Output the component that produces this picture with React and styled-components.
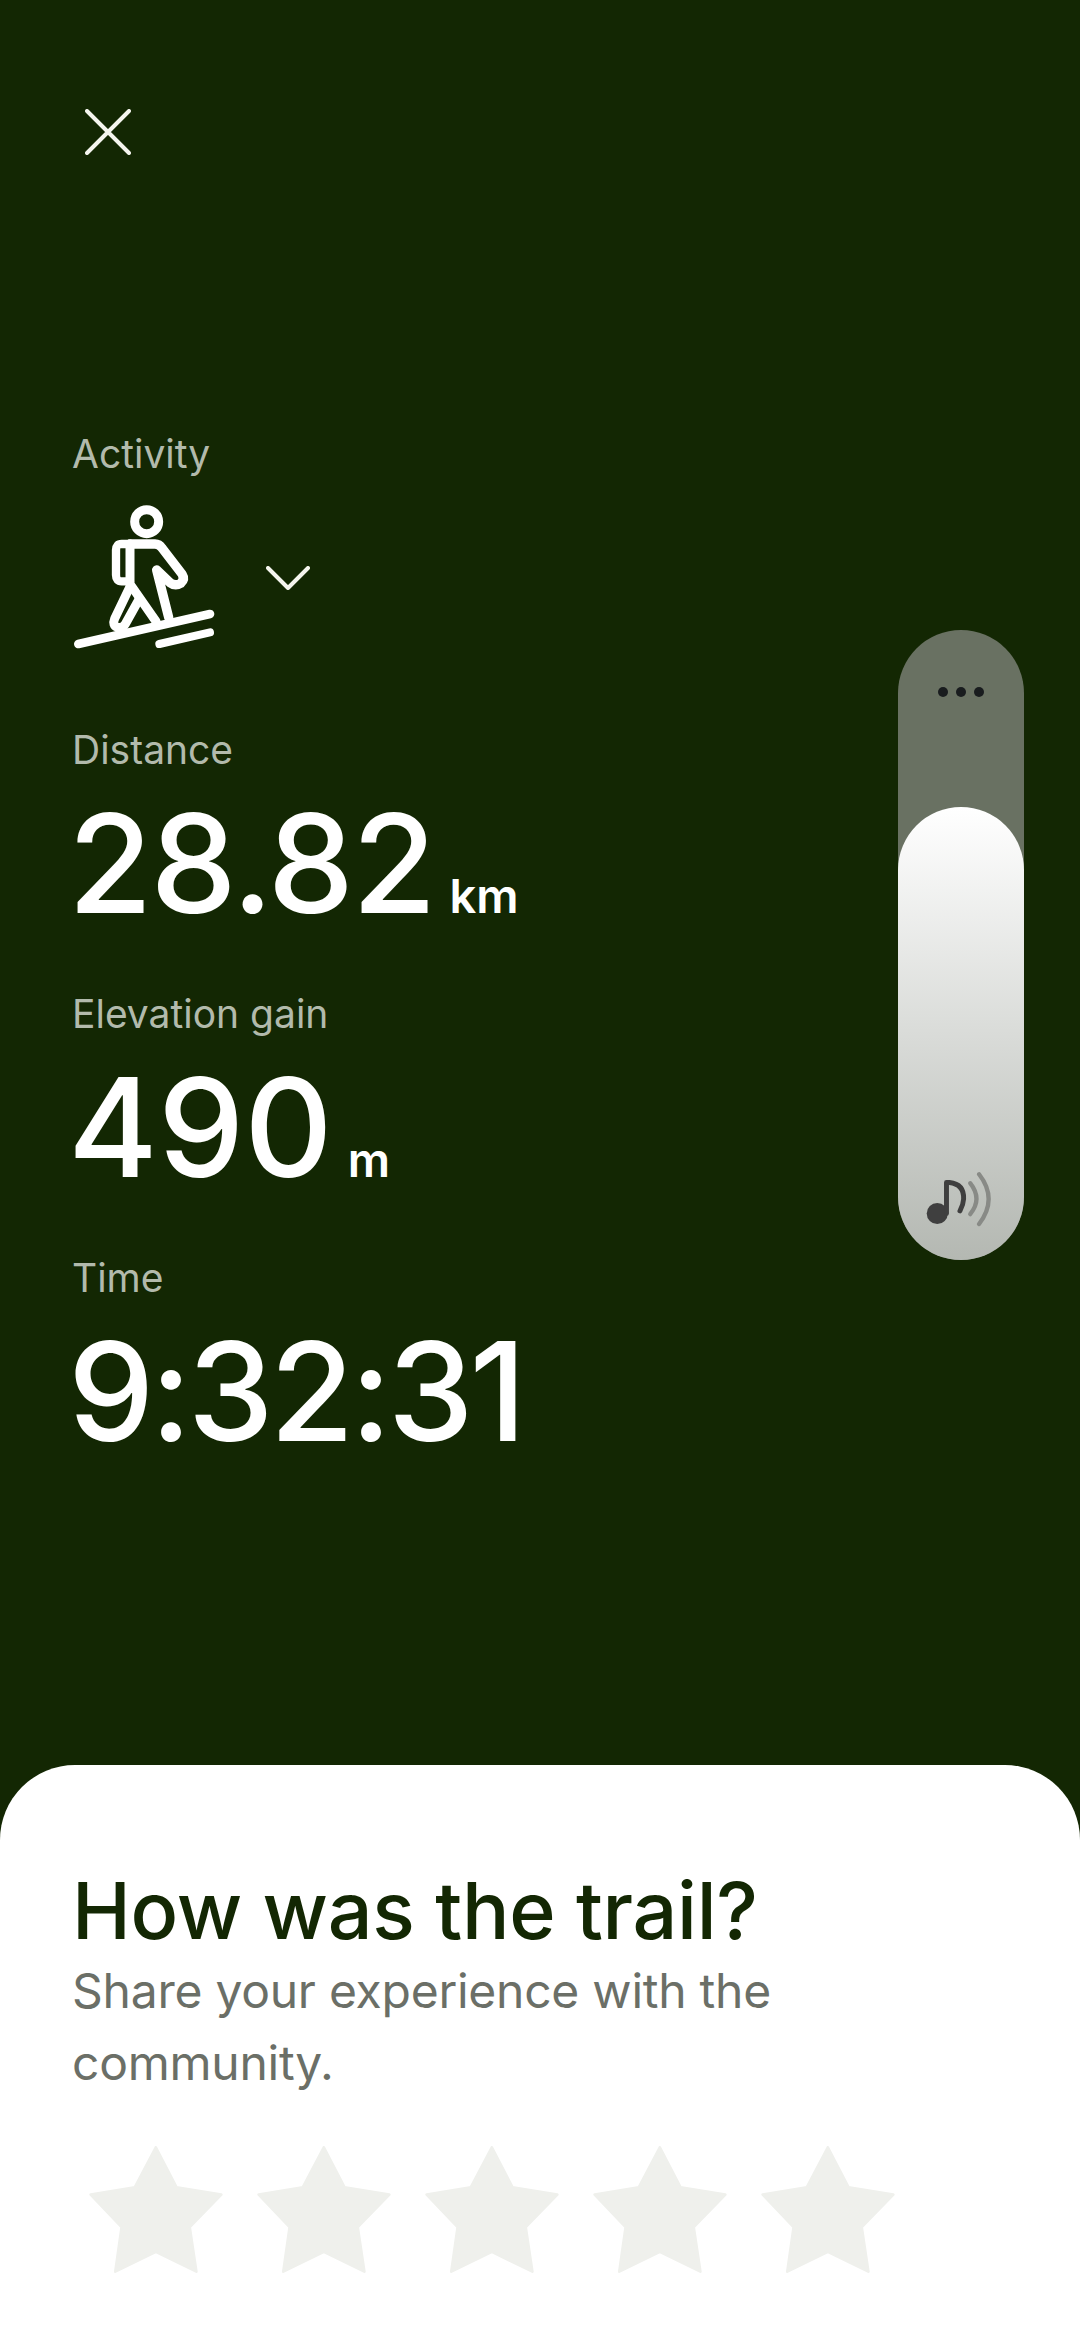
import React from "react";
import styled, { createGlobalStyle } from "styled-components";

const GlobalStyle = createGlobalStyle`
  html, body {
    margin: 0;
    padding: 0;
    background: #132703;
  }
  body {
    font-family: "Inter", "Liberation Sans", sans-serif;
  }
`;

const Page = styled.div`
  width: 1080px;
  height: 2340px;
  display: flex;
  flex-direction: column;
  overflow: hidden;
  background: #132703;
`;

const Top = styled.div`
  height: 1765px;
  padding: 109px 56px 0 72px;
  box-sizing: border-box;
  display: flex;
  flex-direction: column;
`;

const CloseButton = styled.svg`
  width: 46px;
  height: 46px;
  margin-left: 13px;
  flex: none;
`;

const Body = styled.div`
  margin-top: 276px;
  display: flex;
  justify-content: space-between;
  align-items: flex-start;
`;

const Stats = styled.div`
  display: flex;
  flex-direction: column;
`;

const Label = styled.div`
  font-size: 39px;
  line-height: 46px;
  color: #b2baac;
`;

const ActivityRow = styled.div`
  margin-top: 28px;
  margin-bottom: 77px;
  display: flex;
  align-items: center;
  gap: 50px;
`;

const Hiker = styled.svg`
  width: 144px;
  height: 145px;
`;

const Chevron = styled.svg`
  width: 44px;
  height: 24px;
`;

const Stat = styled.div`
  margin-bottom: 52px;
`;

const ValueRow = styled.div`
  display: flex;
  align-items: baseline;
  margin-top: 14px;
  margin-left: -4px;
  color: #fff;
`;

const Value = styled.span`
  font-size: 137px;
  line-height: 152px;
  font-weight: 550;
  letter-spacing: ${({ $tracking }) => $tracking}px;
`;

const Unit = styled.span`
  font-size: 47px;
  line-height: 1;
  font-weight: 600;
  margin-left: 15px;
`;

const Slider = styled.div`
  width: 126px;
  height: 630px;
  margin-top: 199px;
  border-radius: 63px;
  background: #697162;
  display: flex;
  flex-direction: column;
  justify-content: flex-end;
  position: relative;
`;

const Dots = styled.div`
  position: absolute;
  top: 57px;
  left: 0;
  right: 0;
  display: flex;
  justify-content: center;
  gap: 8px;
`;

const Dot = styled.span`
  width: 10px;
  height: 10px;
  border-radius: 50%;
  background: #191c1e;
`;

const SliderFill = styled.div`
  height: 453px;
  border-radius: 63px;
  background: linear-gradient(180deg, #ffffff 0%, #b4b8b2 100%);
  display: flex;
  justify-content: center;
  align-items: flex-end;
  padding-bottom: 33px;
  box-sizing: border-box;
`;

const MusicIcon = styled.svg`
  width: 66px;
  height: 56px;
  margin-right: 5px;
`;

const Sheet = styled.div`
  flex: 1;
  background: #fff;
  border-radius: 75px 75px 0 0;
  padding: 100px 72px 0;
  display: flex;
  flex-direction: column;
`;

const Title = styled.h1`
  margin: 0;
  font-size: 79px;
  line-height: 90px;
  font-weight: 550;
  letter-spacing: -0.3px;
  color: #132703;
`;

const Subtitle = styled.p`
  margin: 0;
  font-size: 48px;
  line-height: 72px;
  letter-spacing: -0.25px;
  width: 760px;
  color: #6b6f67;
`;

const Stars = styled.div`
  margin-top: 47px;
  padding-left: 17px;
  display: flex;
  gap: 34px;
`;

const StarIcon = styled.svg`
  width: 134px;
  height: 127px;
`;

const Star = () => (
  <StarIcon viewBox="88 80 401 382">
    <path
      d="M288 84L350 204L485 226L390 324L410 458L288 398L166 458L185 324L92 226L225 204Z"
      fill="#eff0ec"
      stroke="#eff0ec"
      strokeWidth="8"
      strokeLinejoin="round"
    />
  </StarIcon>
);

const stats = [
  { label: "Distance", value: "28.82", unit: "km", tracking: -2 },
  { label: "Elevation gain", value: "490", unit: "m", tracking: 0 },
  { label: "Time", value: "9:32:31", tracking: -4 },
];

export default function App() {
  return (
    <>
      <GlobalStyle />
      <Page>
        <Top>
          <CloseButton viewBox="0 0 46 46">
            <path
              d="M2 2L44 44M44 2L2 44"
              stroke="#f5f5ef"
              strokeWidth="4"
              strokeLinecap="round"
            />
          </CloseButton>
          <Body>
            <Stats>
              <Label>Activity</Label>
              <ActivityRow>
                <Hiker viewBox="66 255 432 435" fill="none" stroke="#fff" strokeLinecap="round" strokeLinejoin="round">
                  <circle cx="290" cy="305" r="36" strokeWidth="27" />
                  <path
                    d="M240 372H215Q198 372 198 390V465Q198 484 215 484H240"
                    strokeWidth="25"
                  />
                  <path
                    d="M240 372H315Q328 372 336 384L396 462Q406 478 392 490Q376 500 360 488L320 450L356 592"
                    strokeWidth="28"
                  />
                  <path d="M240 372V492L318 604" strokeWidth="27" />
                  <path d="M240 500L194 596Q186 616 202 622Q218 626 226 612L266 540" strokeWidth="27" />
                  <path d="M85 672L480 582" strokeWidth="26" />
                  <path d="M328 672L480 637" strokeWidth="24" />
                </Hiker>
                <Chevron viewBox="0 0 44 24">
                  <path
                    d="M2 2L22 22L42 2"
                    fill="none"
                    stroke="#f5f5ef"
                    strokeWidth="4"
                    strokeLinecap="round"
                    strokeLinejoin="round"
                  />
                </Chevron>
              </ActivityRow>
              {stats.map((s) => (
                <Stat key={s.label}>
                  <Label>{s.label}</Label>
                  <ValueRow>
                    <Value $tracking={s.tracking}>{s.value}</Value>
                    {s.unit && <Unit>{s.unit}</Unit>}
                  </ValueRow>
                </Stat>
              ))}
            </Stats>
            <Slider>
              <Dots>
                <Dot />
                <Dot />
                <Dot />
              </Dots>
              <SliderFill>
                <MusicIcon viewBox="135 155 198 170" fill="none" strokeLinecap="round">
                  <circle cx="168" cy="284" r="32" fill="#3f3f3f" />
                  <path d="M196 284V190H205Q250 195 248 240Q247 258 237 276" stroke="#3f3f3f" strokeWidth="15" strokeLinejoin="round" />
                  <path d="M268 192Q306 240 268 286" stroke="#888a86" strokeWidth="13" />
                  <path d="M295 165Q353 240 295 316" stroke="#888a86" strokeWidth="13" />
                </MusicIcon>
              </SliderFill>
            </Slider>
          </Body>
        </Top>
        <Sheet>
          <Title>How was the trail?</Title>
          <Subtitle>Share your experience with the community.</Subtitle>
          <Stars>
            {[0, 1, 2, 3, 4].map((n) => (
              <Star key={n} />
            ))}
          </Stars>
        </Sheet>
      </Page>
    </>
  );
}
